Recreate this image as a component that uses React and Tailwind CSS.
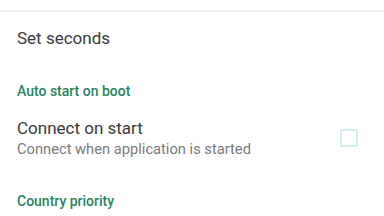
export default function App() {
  return (
    <div className="w-[384px] h-[216px] overflow-hidden bg-white font-['Roboto',sans-serif]">
      <div className="h-[10px]" />
      <div className="h-[2px] bg-[#ececec]" />
      <div className="h-[54px] flex items-center pl-[17px] text-[17px] text-[#3a3a3a]">
        Set seconds
      </div>
      <div className="h-[48px] flex items-center pl-[17px] pt-[3px] text-[14px] font-medium text-[#278560]">
        Auto start on boot
      </div>
      <div className="flex items-center pl-[17px] pr-[26px] pt-[4px]">
        <div className="flex-1 flex flex-col">
          <span className="text-[17px] leading-[21px] text-[#3a3a3a]">Connect on start</span>
          <span className="text-[14.7px] leading-[20px] text-[#7a7a7a]">
            Connect when application is started
          </span>
        </div>
        <div className="w-[18px] h-[18px] border-2 border-[#d3eeee] rounded-[2px] -mt-[2px]" />
      </div>
      <div className="h-[58px] flex items-center pl-[17px] pt-[27px] text-[14px] font-medium text-[#278560]">
        Country priority
      </div>
    </div>
  );
}
